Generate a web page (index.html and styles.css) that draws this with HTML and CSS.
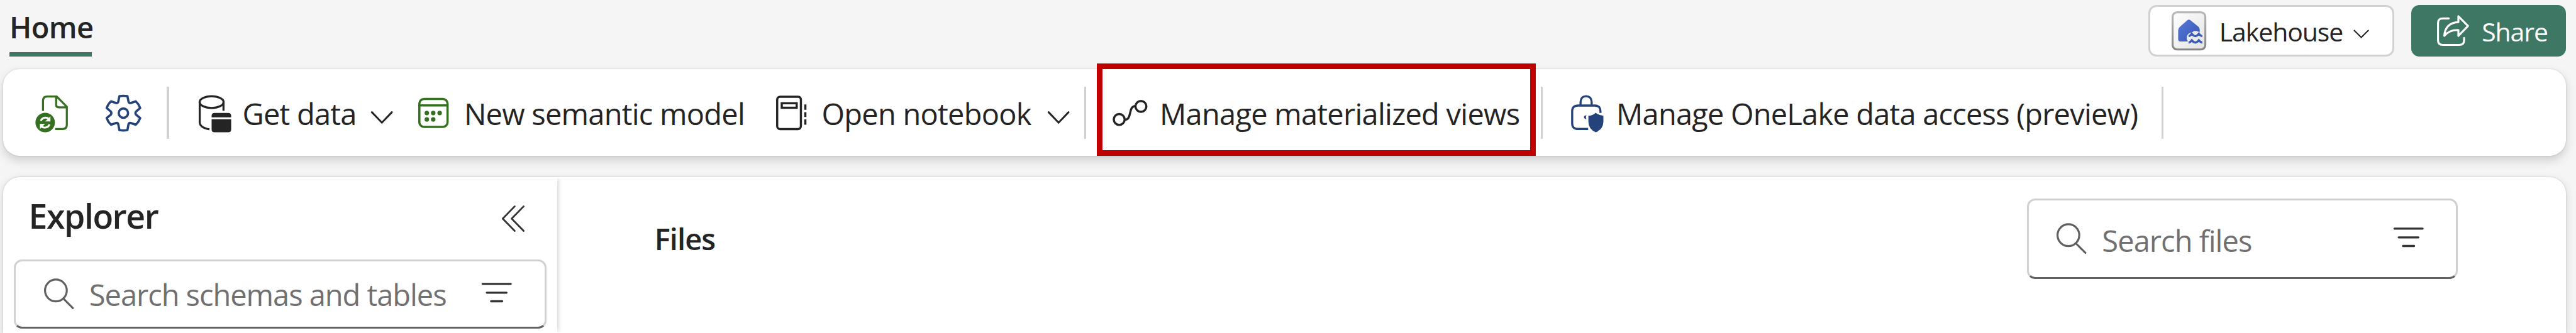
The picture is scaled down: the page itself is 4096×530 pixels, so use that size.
FILE: index.html
```
<!DOCTYPE html>
<html lang="en">
<head>
<meta charset="utf-8">
<title>Lakehouse</title>
<link rel="stylesheet" href="styles.css">
</head>
<body>
<header class="topbar">
  <div class="tab">Home</div>
  <button class="btn mode">
    <svg class="mode-icon" viewBox="0 0 59.3 67">
      <defs>
        <linearGradient id="tile" x1="0" y1="0" x2="1" y2="1"><stop offset="0" stop-color="#fff"/><stop offset="1" stop-color="#e3e3e3"/></linearGradient>
        <linearGradient id="edge" x1="0" y1="0" x2="0" y2="1"><stop offset="0" stop-color="#b8b8b8"/><stop offset="1" stop-color="#858585"/></linearGradient>
        <linearGradient id="house" x1="0" y1="0" x2="1" y2="1"><stop offset="0" stop-color="#5379dd"/><stop offset="1" stop-color="#3b56ac"/></linearGradient>
      </defs>
      <rect x="1.7" y="1.7" width="55.9" height="63.6" rx="7.5" fill="url(#tile)" stroke="url(#edge)" stroke-width="3.4"/>
      <path d="M26.8 15.2Q29.5 13 32.2 15.2L45.5 26Q48 28 48 31V36Q40 31 35 36Q28 37 26 43Q25 48 28 51.7H15.5Q11.2 51.7 11.2 47.5V32.5Q11.2 29 14 26.5Z" fill="url(#house)"/>
      <path d="M29 42.5Q31.500 42.500 34.500 38.500Q37.500 42.500 40.500 42.500Q43.500 42.500 46.500 38.500Q49.500 42.500 52.500 42.500M29 53.500Q31.500 53.500 34.500 49.500Q37.500 53.500 40.500 53.500Q43.500 53.500 46.500 49.500Q49.500 53.500 52.500 53.500" fill="none" stroke="#3c5bb5" stroke-width="3.6"/>
    </svg>
    <span class="mode-label">Lakehouse</span>
    <svg class="mode-chevron" viewBox="0 0 27 15"><path d="M1 1L13.500 13.500L26 1" fill="none" stroke="#242424" stroke-width="2.200"/></svg>
  </button>
  <button class="btn share">
    <svg class="share-icon" viewBox="0 0 55 53">
      <g fill="none" stroke="#fff" stroke-width="3.4" stroke-linecap="round" stroke-linejoin="round">
        <path d="M20 5.700H10Q1.700 5.700 1.700 14V43Q1.700 51 10 51H38Q46.300 51 46.300 43V39"/>
        <path d="M36.500 2L53 18.700L36.500 35.500V25.500Q21 25 12.500 35.500Q14 13.500 36.500 12Z"/>
      </g>
    </svg>
    <span>Share</span>
  </button>
</header>

<nav class="toolbar">
  <svg class="icon refresh" viewBox="0 0 56 64">
    <path d="M13.300 27.300V10Q13.300 2.700 20.500 2.700H36.700L54 20.300V51Q54 58.300 47 58.300H34M35.700 2.700V17Q35.700 21.300 40 21.300H54" fill="none" stroke="#34701f" stroke-width="3.500"/>
    <circle cx="17" cy="47.300" r="16.600" fill="#34701f"/>
    <path d="M9.500 44.500Q12 39 18 39Q20.500 39 23 40.800M24.600 50.500Q22 56 16 56Q13.500 56 11 54.200" fill="none" stroke="#fff" stroke-width="3.200"/>
    <path d="M26 36.500V45.500H17ZM8 58.500V49.500H17Z" fill="#fff"/>
  </svg>
  <svg class="icon gear" viewBox="0 0 61 64">
    <path d="M23.500 2.200Q30.300 1 37.200 2.200L39 11.500Q39.700 14.500 42.800 14L51.500 11Q56.500 15.500 59 22.500L51.800 28.500Q50 31 51.800 33.700L59 39.700Q56.500 46.500 51.500 51L42.800 48Q39.700 47.500 39 50.500L37.200 60.200Q30.300 61.400 23.500 60.200L21.600 50.500Q20.900 47.500 17.800 48L9.100 51Q4.100 46.500 1.700 39.700L8.900 33.700Q10.700 31 8.900 28.500L1.700 22.500Q4.100 15.500 9.100 11L17.800 14Q20.900 14.500 21.600 11.500Z" fill="none" stroke="#24437a" stroke-width="3.900" stroke-linejoin="round"/>
    <circle cx="30.300" cy="31.200" r="8" fill="none" stroke="#24437a" stroke-width="3.900"/>
  </svg>
  <i class="sep sep-a"></i>
  <svg class="icon database" viewBox="0 0 56 64">
    <g fill="none" stroke="#242424" stroke-width="3.500">
      <ellipse cx="22" cy="12.300" rx="20.500" ry="10"/>
      <path d="M1.700 12V47Q2 56 18.300 59M42.300 12V27"/>
    </g>
    <path d="M22 38.300V36Q22 31 27 31H50.400Q55.400 31 55.400 36V38.300ZM22 41.700H55.400V59Q55.400 64 50.400 64H27Q22 64 22 59Z" fill="#242424"/>
  </svg>
  <span class="label get-data">Get data</span>
  <svg class="icon chevron chevron-a" viewBox="0 0 37 64"><path d="M1.500 29.700L18.500 47.500L35.500 29.700" fill="none" stroke="#242424" stroke-width="3.200" stroke-linecap="round"/></svg>
  <svg class="icon model" viewBox="0 0 52 64">
    <rect x="1.900" y="7" width="48.200" height="47.800" rx="8" fill="none" stroke="#34701f" stroke-width="3.800"/>
    <path d="M2 18H50" stroke="#34701f" stroke-width="3.600"/>
    <g fill="#34701f"><circle cx="14.700" cy="31" r="3.900"/><circle cx="25.600" cy="31" r="3.900"/><circle cx="36.600" cy="31" r="3.900"/><circle cx="14.700" cy="42" r="3.900"/><circle cx="25.600" cy="42" r="3.900"/></g>
  </svg>
  <span class="label new-model">New semantic model</span>
  <svg class="icon notebook" viewBox="0 0 52 64">
    <g fill="none" stroke="#242424" stroke-width="3.700">
      <rect x="1.900" y="3.200" width="40.500" height="55.300" rx="5"/>
      <rect x="9.700" y="14.300" width="25.500" height="7.700"/>
      <path d="M50 16.500V25.500M50 29.500V38M50 42V51"/>
    </g>
  </svg>
  <span class="label open-notebook">Open notebook</span>
  <svg class="icon chevron chevron-b" viewBox="0 0 37 64"><path d="M1.500 29.700L18.500 47.500L35.500 29.700" fill="none" stroke="#242424" stroke-width="3.200" stroke-linecap="round"/></svg>
  <i class="sep sep-b"></i>
  <svg class="icon lineage" viewBox="0 0 60 64">
    <g fill="none" stroke="#242424" stroke-width="3.700">
      <circle cx="11.400" cy="42" r="9.300"/><circle cx="48.500" cy="19.700" r="9.300"/>
      <path d="M20.700 42.600C34 43 26 19.200 39.200 19"/>
    </g>
  </svg>
  <span class="label views">Manage materialized views</span>
  <i class="sep sep-c"></i>
  <svg class="icon lock" viewBox="0 0 56 64">
    <path d="M16.300 18V12Q17 2.300 25.800 2.300Q34.600 2.300 35.300 12V18M50.300 31V28Q50.300 18.300 40.500 18.300H12Q2 18.300 2 28V48.500Q2 58.300 12 58.300H29.300" fill="none" stroke="#24437a" stroke-width="3.600"/>
    <path d="M26.500 34.800Q22 35 22 38Q22 41 26.500 41.500Q24.500 38 26.500 34.800Z" fill="#24437a"/>
    <path d="M42.300 30.500Q48 35.400 55.300 35.800V46Q55 59 42.300 64Q29.900 59 29.700 46V35.800Q36.600 35.400 42.300 30.500Z" fill="#24437a"/>
  </svg>
  <span class="label access">Manage OneLake data access (preview)</span>
  <i class="sep sep-d"></i>
  <div class="highlight"></div>
</nav>

<main class="panels">
  <aside class="explorer">
    <div class="explorer-head">
      <h2 class="explorer-title">Explorer</h2>
      <svg class="collapse" viewBox="0 0 40 45"><path d="M23 1.500L2.500 22.500L23 43.500M38.300 1.500L17.800 22.500L38.300 43.500" fill="none" stroke="#333" stroke-width="3" stroke-linecap="round" stroke-linejoin="round"/></svg>
    </div>
    <div class="search search-tables">
      <svg class="magnifier" viewBox="0 0 51 53"><path d="M33 34.500L49.300 51" stroke="#616161" stroke-width="3.400" stroke-linecap="round"/><circle cx="20.300" cy="20.700" r="18.600" fill="none" stroke="#616161" stroke-width="3.400"/></svg>
      <span class="placeholder">Search schemas and tables</span>
      <svg class="filter" viewBox="0 0 51 38"><path d="M1.500 2H49.500M8.700 17H42.300M16 31.700H35" stroke="#333" stroke-width="3.600" stroke-linecap="round"/></svg>
    </div>
  </aside>
  <section class="content">
    <h3 class="content-title">Files</h3>
    <div class="search search-files">
      <svg class="magnifier" viewBox="0 0 51 53"><path d="M33 34.500L49.300 51" stroke="#616161" stroke-width="3.400" stroke-linecap="round"/><circle cx="20.300" cy="20.700" r="18.600" fill="none" stroke="#616161" stroke-width="3.400"/></svg>
      <span class="placeholder">Search files</span>
      <svg class="filter" viewBox="0 0 51 38"><path d="M1.500 2H49.500M8.700 17H42.300M16 31.700H35" stroke="#333" stroke-width="3.600" stroke-linecap="round"/></svg>
    </div>
  </section>
</main>
</body>
</html>
```
FILE: styles.css
```
* { box-sizing: border-box; }

html { font-size: 93.091px; }

body {
  margin: 0;
  display: flex;
  flex-direction: column;
  height: 530px;
  overflow: hidden;
  background: #f5f5f5;
  color: #242424;
  font-family: "Open Sans", "Noto Sans", sans-serif;
  font-size: .505rem;
  letter-spacing: -.016em;
  white-space: nowrap;
}

svg { display: block; flex: none; overflow: visible; }
h2, h3 { margin: 0; font-weight: 600; }

/* Top bar */
.topbar {
  display: flex;
  flex: none;
  align-items: flex-start;
  height: 1.187rem;
  padding: .083rem .17rem 0 .16rem;
}
.tab {
  width: 1.41rem;
  height: .887rem;
  line-height: .765rem;
  font-weight: 600;
  letter-spacing: -.012em;
  border-bottom: .08rem solid #3f7765;
  margin-right: auto;
}
.btn {
  display: flex;
  align-items: center;
  height: .887rem;
  padding: 0;
  border: 0;
  border-radius: .14rem;
  font-family: inherit;
  font-size: .44rem;
  letter-spacing: -.026em;
  color: inherit;
}
.mode {
  width: 4.193rem;
  margin-right: .3rem;
  background: #fff;
  border: .035rem solid #d1d1d1;
}
.mode-icon { width: .593rem; height: .67rem; margin-left: .365rem; }
.mode-label { width: 2.16rem; margin-left: .22rem; text-align: left; padding-top: .03rem; }
.mode-chevron { width: .27rem; height: .15rem; margin: .11rem 0 0 .13rem; }
.share { width: 2.64rem; background: #3f7765; color: #fff; }
.share-icon { width: .55rem; height: .53rem; margin-left: .44rem; }
.share span { margin-left: .21rem; padding-top: .03rem; }

/* Toolbar */
.toolbar {
  position: relative;
  display: flex;
  flex: none;
  align-items: center;
  height: 1.48rem;
  margin: 0 .17rem 0 .05rem;
  padding-top: .03rem;
  background: #fff;
  border-radius: .28rem;
  box-shadow: 0 0 3px rgba(0, 0, 0, .14), 0 7px 16px rgba(0, 0, 0, .16);
}
.icon { height: .64rem; }
.label { text-indent: .012rem; }
.refresh { width: .56rem; margin-left: .55rem; }
.gear { width: .61rem; margin-left: .65rem; }
.database { width: .56rem; margin-left: .51rem; }
.chevron { width: .37rem; }
.chevron-a { margin-left: .14rem; }
.chevron-b { margin-left: .2rem; }
.model { width: .52rem; margin-left: .44rem; }
.notebook { width: .52rem; margin-left: .5rem; }
.lineage { width: .6rem; margin-left: .44rem; }
.lock { width: .56rem; margin-left: .48rem; }
.get-data { width: 2.07rem; margin-left: .17rem; }
.new-model { width: 4.844rem; margin-left: .246rem; }
.open-notebook { width: 3.675rem; margin-left: .245rem; }
.views { width: 6.2rem; margin-left: .2rem; }
.access { width: 9rem; margin-left: .2rem; letter-spacing: -.017em; }
.sep { width: .035rem; height: .885rem; margin-right: .005rem; margin-bottom: .03rem; background: #d1d1d1; }
.sep-a { margin-left: .43rem; }
.sep-b { margin-left: .25rem; }
.sep-c, .sep-d { margin-left: .32rem; }
.highlight {
  position: absolute;
  left: 18.688rem;
  top: -.107rem;
  width: 7.49rem;
  height: 1.587rem;
  border: .1rem solid #c00000;
}

/* Panels */
.panels {
  display: flex;
  flex: 1;
  margin: .366rem .17rem 0 .05rem;
  background: #fff;
  border-radius: .28rem .28rem 0 0;
  box-shadow: 0 0 3px rgba(0, 0, 0, .14), 0 4px 14px rgba(0, 0, 0, .14);
}
.explorer {
  width: 9.47rem;
  padding: 0 .19rem;
  border-radius: .28rem 0 0 0;
  box-shadow: 5px 0 6px -3px rgba(0, 0, 0, .16);
}
.explorer-head {
  display: flex;
  align-items: center;
  height: 1.404rem;
  padding: 0 .37rem 0 .25rem;
}
.explorer-title { font-size: .575rem; letter-spacing: -.027em; margin-right: auto; padding-bottom: .09rem; }
.collapse { width: .4rem; height: .45rem; }

.search {
  display: flex;
  align-items: center;
  background: #fff;
  border: .035rem solid #d1d1d1;
  border-bottom: .04rem solid #616161;
  border-radius: .14rem;
  color: #707070;
  letter-spacing: -.022em;
}
.search-tables { height: 1.18rem; padding: 0 .56rem 0 .477rem; }
.search-files { width: 7.365rem; height: 1.367rem; margin-left: auto; padding: 0 .56rem 0 .477rem; }
.magnifier { width: .51rem; height: .53rem; }
.placeholder { margin-left: .265rem; margin-right: auto; padding-top: .03rem; }
.search-files .placeholder { padding-top: .06rem; letter-spacing: -.02em; }
.filter { width: .51rem; height: .38rem; }

.content {
  flex: 1;
  display: flex;
  align-items: flex-start;
  padding: .367rem 1.845rem 0 1.66rem;
}
.content-title { font-size: .505rem; letter-spacing: -.02em; line-height: 1.39rem; }
```
